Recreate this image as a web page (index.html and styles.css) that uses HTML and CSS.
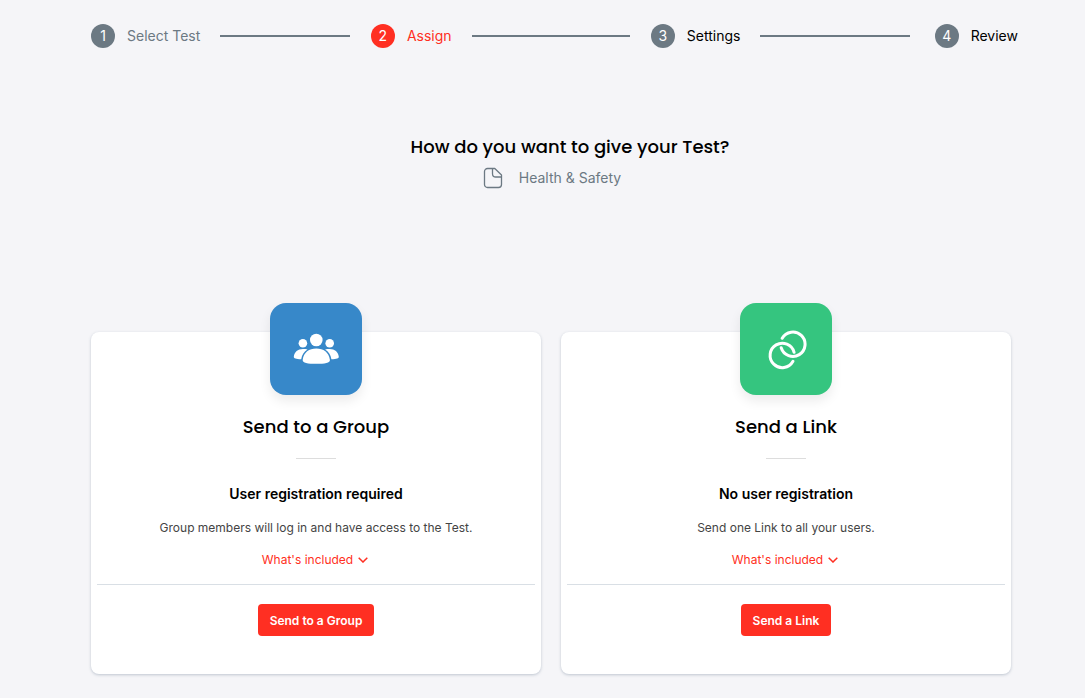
FILE: index.html
```html
<!DOCTYPE html>
<html lang="en">
<head>
    <meta charset="UTF-8">
    <meta name="viewport" content="width=device-width, initial-scale=1.0">
    <title>Assign Test</title>
    <link rel="stylesheet" href="styles.css">
</head>
<body>
    <main class="page">
        <ol class="steps">
            <li class="step done"><span class="number">1</span><span>Select Test</span></li>
            <li class="step active" aria-current="step"><span class="number">2</span><span>Assign</span></li>
            <li class="step"><span class="number">3</span><span>Settings</span></li>
            <li class="step"><span class="number">4</span><span>Review</span></li>
        </ol>

        <header class="intro">
            <h1>How do you want to give your Test?</h1>
            <p class="test-name">
                <svg width="20" height="22" viewBox="0 0 20 22" fill="none" stroke="currentColor" stroke-width="1.3" stroke-linejoin="round" aria-hidden="true">
                    <path d="M4.5 1.5h7.3L18.500 8v9.500a3 3 0 0 1-3 3h-11a3 3 0 0 1-3-3v-13a3 3 0 0 1 3-3z"/>
                    <path d="M9.500 1.500v5.200a3.300 3.300 0 0 0 3.300 3.300h5.700"/>
                </svg>
                <span>Health &amp; Safety</span>
            </p>
        </header>

        <div class="cards">
            <section class="card">
                <div class="card-icon group">
                    <svg width="46" height="32" viewBox="0 0 46 32" fill="#fff" aria-hidden="true">
                        <circle cx="23.300" cy="7" r="6.300"/>
                        <circle cx="9.900" cy="10.200" r="4.300"/>
                        <circle cx="36.700" cy="10.200" r="4.300"/>
                        <path d="M9.700 26.700C10.800 19.400 16 15.500 23.300 15.500s12.500 3.900 13.600 11.200c.5 3.500-5.200 4.100-13.600 4.100s-14.100-.6-13.600-4.100z"/>
                        <path d="M14.500 16.500C11 18.600 9 21.800 8.200 26.200 3 26 .6 25.300.8 23.700 1.400 19 4.800 16 9.900 16c1.700 0 3.300.1 4.600.5z"/>
                        <path d="M32.100 16.500c3.500 2.100 5.500 5.300 6.300 9.700 5.200-.2 7.600-.9 7.400-2.500C45.200 19 41.800 16 36.700 16c-1.700 0-3.300.1-4.600.5z"/>
                    </svg>
                </div>
                <h2>Send to a Group</h2>
                <hr class="short">
                <h3>User registration required</h3>
                <p>Group members will log in and have access to the Test.</p>
                <a class="included" href="#">What's included
                    <svg width="10" height="6" viewBox="0 0 10 6" fill="none" stroke="currentColor" stroke-width="1.5" aria-hidden="true"><path d="M.7.7 5 5 9.300.7"/></svg>
                </a>
                <hr>
                <button type="button">Send to a Group</button>
            </section>

            <section class="card">
                <div class="card-icon link">
                    <svg width="42" height="42" viewBox="-1 -1 42 42" fill="none" stroke="#fff" stroke-width="3" stroke-linecap="round" aria-hidden="true">
                        <path d="M16.200 9.300A12.200 12.200 0 1 1 15.200 18.800"/>
                        <path d="M27 32.300A12.200 12.200 0 1 1 28.100 23.300"/>
                    </svg>
                </div>
                <h2>Send a Link</h2>
                <hr class="short">
                <h3>No user registration</h3>
                <p>Send one Link to all your users.</p>
                <a class="included" href="#">What's included
                    <svg width="10" height="6" viewBox="0 0 10 6" fill="none" stroke="currentColor" stroke-width="1.5" aria-hidden="true"><path d="M.7.7 5 5 9.300.7"/></svg>
                </a>
                <hr>
                <button type="button">Send a Link</button>
            </section>
        </div>
    </main>
</body>
</html>
```
FILE: styles.css
```css
* {
    box-sizing: border-box;
}
body {
    margin: 0;
    background-color: #f5f5f8;
    color: #000;
    font-family: Inter, Arial, sans-serif;
    font-size: 14px;
    line-height: 24px;
}
h1, h2, h3, p {
    margin: 0;
}
h1, h2 {
    font-family: Poppins, Inter, sans-serif;
    font-size: 18px;
    font-weight: 500;
    line-height: 28px;
}
.page {
    padding: 24px 74px 24px 91px;
}

/* steps */
.steps {
    display: grid;
    grid-template-columns: 1fr 1fr 1fr auto;
    margin: 0 -7px 0 0;
    padding: 0;
    list-style: none;
}
.step {
    display: flex;
    align-items: center;
    gap: 12px;
    white-space: nowrap;
}
.step:not(:last-child)::after {
    content: "";
    flex: 1;
    height: 2px;
    margin: 0 21px 0 8px;
    background-color: #6c7983;
}
.step:last-child {
    padding-left: 4px;
}
.number {
    width: 24px;
    height: 24px;
    border-radius: 50%;
    background-color: #6c7983;
    color: #fff;
    text-align: center;
}
.done {
    color: #6c7983;
}
.active {
    color: #ff2f22;
}
.active .number {
    background-color: #ff2f22;
}

/* title */
.intro {
    padding: 85px 0 108px;
    text-align: center;
}
.intro h1 {
    padding-left: 38px;
}
.test-name {
    display: flex;
    align-items: center;
    justify-content: center;
    gap: 16px;
    padding: 5px 0 5px 2px;
    color: #6c7983;
}

/* cards */
.cards {
    display: grid;
    grid-template-columns: 1fr 1fr;
    gap: 20px;
    padding-top: 29px;
}
.card {
    display: flex;
    flex-direction: column;
    align-items: center;
    padding: 0 6px 38px;
    border-radius: 8px;
    background-color: #fff;
    box-shadow: 0 1px 3px rgba(90, 110, 135, 0.35);
    text-align: center;
}
.card-icon {
    display: flex;
    align-items: center;
    justify-content: center;
    width: 92px;
    height: 92px;
    margin-top: -29px;
    margin-bottom: 18px;
    border-radius: 16px;
    box-shadow: 0 6px 12px rgba(0, 0, 0, 0.08);
}
.group {
    background-color: #3788c9;
}
.link {
    background-color: #35c57f;
}
.card hr {
    width: 100%;
    margin: 12px 0 19px;
    border: 0;
    border-top: 1px solid #d9dfe5;
}
.card hr.short {
    width: 40px;
    margin: 17px 0 23px;
    border-color: #ddd;
}
h3 {
    font-size: 14px;
    font-weight: 600;
    line-height: 24px;
}
.card p {
    margin: 12px 0 10px;
    color: #444;
    font-size: 12px;
    line-height: 20px;
}
.included {
    display: flex;
    align-items: center;
    gap: 5px;
    height: 24px;
    padding-right: 2px;
    color: #ff2f22;
    font-size: 12px;
    text-decoration: none;
}
button {
    height: 32px;
    padding: 0 12px;
    border: 0;
    border-radius: 4px;
    background-color: #ff2f22;
    color: #fff;
    font-family: inherit;
    font-size: 12px;
    font-weight: 600;
    cursor: pointer;
}
```
